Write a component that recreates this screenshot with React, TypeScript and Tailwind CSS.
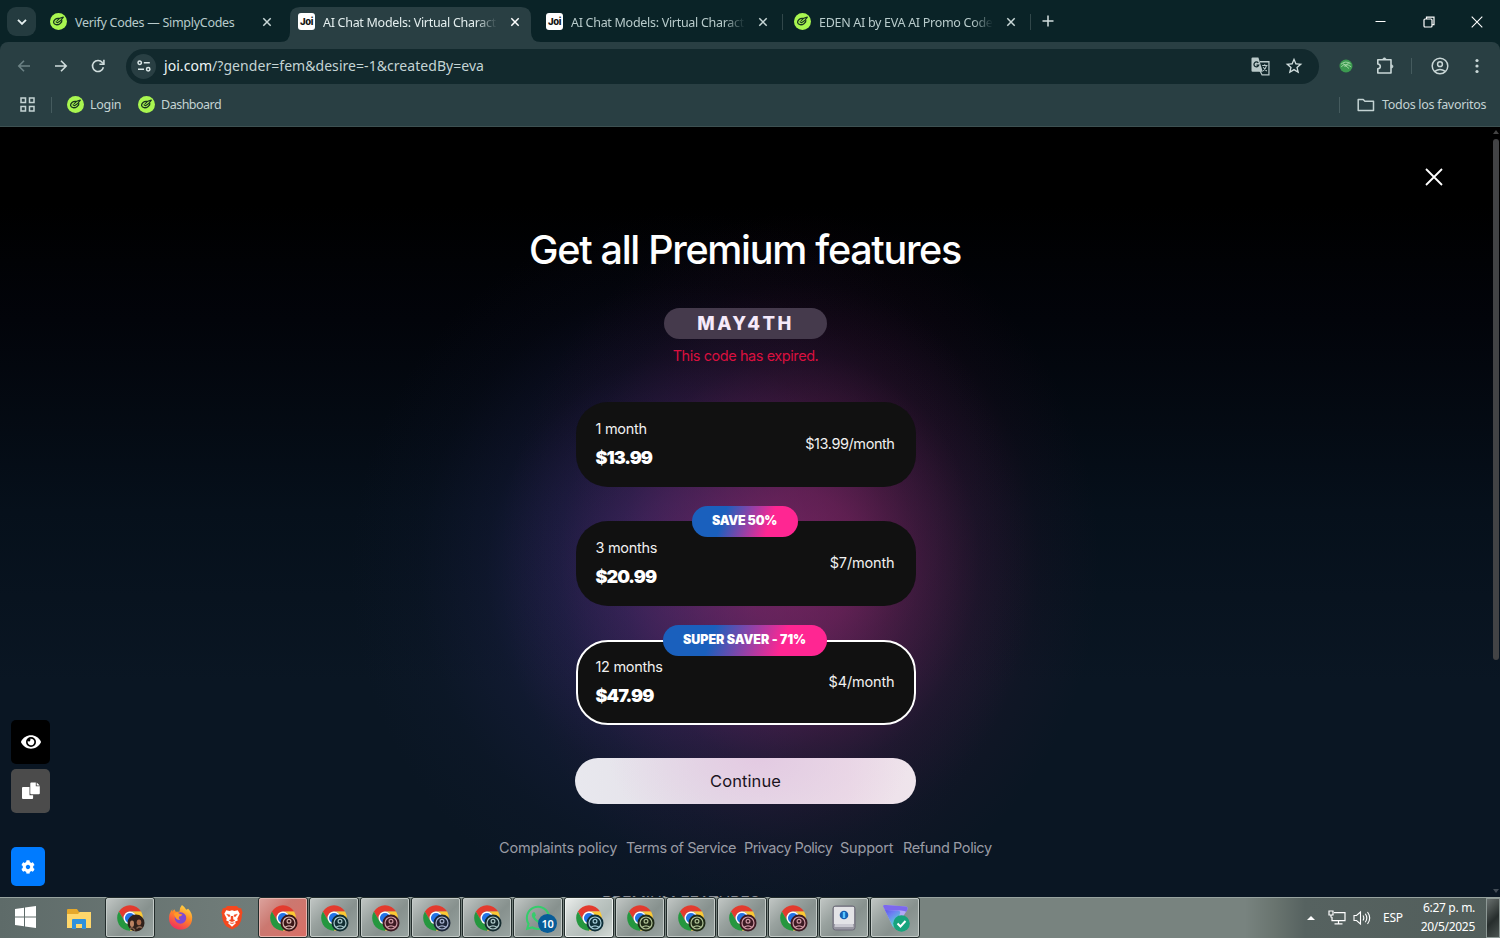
import React from 'react';
import { FaEye, FaCog, FaWhatsapp } from 'react-icons/fa';
import { MdOutlineStarBorder } from 'react-icons/md';

interface TabInfo {
    title: string;
    icon: 'simply' | 'joi';
    active?: boolean;
    separator?: boolean;
}

interface Plan {
    name: string;
    price: string;
    perMonth: string;
    badge?: string;
    badgeClass?: string;
    selected?: boolean;
}

const TABS: TabInfo[] = [
    { title: 'Verify Codes — SimplyCodes', icon: 'simply' },
    { title: 'AI Chat Models: Virtual Charact', icon: 'joi', active: true },
    { title: 'AI Chat Models: Virtual Charact', icon: 'joi', separator: true },
    { title: 'EDEN AI by EVA AI Promo Code', icon: 'simply', separator: true },
];

const PLANS: Plan[] = [
    { name: '1 month', price: '$13.99', perMonth: '$13.99/month' },
    { name: '3 months', price: '$20.99', perMonth: '$7/month', badge: 'SAVE 50%', badgeClass: 'w-[106px] tracking-[-0.25px]' },
    { name: '12 months', price: '$47.99', perMonth: '$4/month', badge: 'SUPER SAVER - 71%', badgeClass: 'w-[164px] tracking-[-0.05px]', selected: true },
];

const LINKS = [
    { label: 'Complaints policy', width: 'w-[119px]' },
    { label: 'Terms of Service', width: 'w-[110px] tracking-[-0.42px]' },
    { label: 'Privacy Policy', width: 'w-[88px] tracking-[-0.55px]' },
    { label: 'Support', width: 'w-[55px]' },
    { label: 'Refund Policy', width: 'w-[89px] tracking-[-0.42px]' },
];

function SimplyIcon() {
    return (
        <svg viewBox="0 0 17 17" className="h-[17px] w-[17px] shrink-0">
            <circle cx="8.5" cy="8.5" r="8.5" fill="#a9f650" />
            <g fill="none" stroke="#17331f" strokeLinecap="round" strokeLinejoin="round">
                <path d="M8.8 5.4C6 4.9 3.3 7.2 3.6 9.5c.4 2.6 4 2.9 6.3 1.2 1.5-1.1 2.2-2.3 1.9-3.2" strokeWidth="1.3" />
                <path d="m6.1 8.8 1.4.9c1.8-.7 4.3-3 5.8-5.5-2.4.3-5 1.8-6 3.3" strokeWidth="1.2" />
            </g>
        </svg>
    );
}

function JoiIcon() {
    return (
        <span className="flex h-[17px] w-[17px] shrink-0 items-center justify-center rounded-[3px] bg-white font-[Inter] text-[9.5px] font-extrabold leading-none tracking-[-0.4px] text-[#141414]">
            Joi
        </span>
    );
}

function CrossIcon({ className }: { className: string }) {
    return (
        <svg viewBox="0 0 10 10" className={className} fill="none" stroke="currentColor">
            <path d="m1.3 1.3 7.4 7.4M8.7 1.3 1.3 8.7" strokeWidth="1.5" />
        </svg>
    );
}

function Tab({ tab }: { tab: TabInfo }) {
    return (
        <div className="relative h-[35px] w-[248px] shrink-0">
            {tab.active && (
                <svg viewBox="0 0 261 35" className="absolute left-[-10px] top-0 h-[35px] w-[261px]">
                    <path d="M0 35Q10 35 10 25V10Q10 0 20 0H241Q251 0 251 10V25Q251 35 261 35Z" fill="#293f43" />
                </svg>
            )}
            <div className="relative flex h-[29px] items-center pl-2">
                {tab.icon === 'simply' ? <SimplyIcon /> : <JoiIcon />}
                <span
                    className={`ml-2 w-[174px] whitespace-nowrap pt-[3px] text-[12.5px] tracking-[-0.29px] ${tab.active ? 'text-[#e3eeee]' : 'text-[#b8cbcb]'} ${tab.title.startsWith('Verify') ? '' : '[mask-image:linear-gradient(to_right,#000_88%,transparent)]'}`}
                >
                    {tab.title}
                </span>
                <CrossIcon className={`ml-[13px] h-[10px] w-[10px] ${tab.active ? 'text-white' : 'text-[#c9d8d8]'}`} />
                {tab.separator && <span className="ml-[14px] h-4 w-px bg-[#31474a]" />}
            </div>
        </div>
    );
}

function TabStrip() {
    return (
        <div className="flex h-[42px] bg-[#0a2327] pt-[7px]">
            <div className="ml-[7px] mr-[6px] flex h-[29px] w-[29px] shrink-0 items-center justify-center rounded-[9px] bg-[#243b3f]">
                <svg viewBox="0 0 10 6" className="h-[6px] w-[10px]" fill="none" stroke="#e6f0f0" strokeWidth="1.9">
                    <path d="m1 .8 4 4 4-4" />
                </svg>
            </div>
            {TABS.map((tab, i) => (
                <Tab key={i} tab={tab} />
            ))}
            <svg viewBox="0 0 12 12" className="ml-[8px] mt-[8px] h-3 w-3" fill="none" stroke="#d3e0e0" strokeWidth="1.5">
                <path d="M6 .5v11M.5 6h11" />
            </svg>
            <div className="ml-auto flex h-[29px] items-center">
                <svg viewBox="0 0 11 11" className="mr-[37px] h-[11px] w-[11px]" stroke="#fff">
                    <path d="M.5 5.5h10" />
                </svg>
                <svg viewBox="0 0 12 12" className="mr-[36px] h-3 w-3" fill="none" stroke="#fff" strokeWidth="1.2">
                    <rect x="1" y="3" width="8" height="8" rx="1" />
                    <path d="M3.5 3V1.2H11v7.4H9.2" />
                </svg>
                <svg viewBox="0 0 12 12" className="mr-[17.5px] h-3 w-3" fill="none" stroke="#fff" strokeWidth="1.1">
                    <path d="m.7.7 10.6 10.6M11.3.7.7 11.3" />
                </svg>
            </div>
        </div>
    );
}

function Toolbar() {
    return (
        <div className="flex h-[48px] items-center rounded-t-[8px] bg-[#293f43]">
            <svg viewBox="0 0 14 14" className="ml-[17px] h-[14px] w-[14px]" fill="none" stroke="#6c8285" strokeWidth="1.6">
                <path d="M13 7H1.800M7 1.800 1.800 7 7 12.200" />
            </svg>
            <svg viewBox="0 0 14 14" className="ml-[23px] h-[14px] w-[14px]" fill="none" stroke="#d0dddd" strokeWidth="1.6">
                <path d="M1 7h11.200M7 1.800 12.200 7 7 12.200" />
            </svg>
            <svg viewBox="0 0 14 14" className="ml-[23px] h-[14px] w-[14px]" fill="none" stroke="#d0dddd" strokeWidth="1.6">
                <path d="M12.400 8.300A5.500 5.500 0 1 1 11.300 3.500L12.800 5" />
                <path d="M12.900 .8v4.500H8.400" />
            </svg>
            <div className="ml-[21px] flex h-[35px] w-[1193px] items-center rounded-full bg-[#12292d]">
                <span className="ml-[5px] flex h-[25px] w-[25px] items-center justify-center rounded-full bg-[#293f43]">
                    <svg viewBox="0 0 14 12" className="h-3 w-[14px]" fill="none" stroke="#dce8e8" strokeWidth="1.5">
                        <circle cx="2.7" cy="2.7" r="1.7" />
                        <path d="M6.800 2.700h6M1 9.300h6" />
                        <circle cx="11.2" cy="9.3" r="1.7" />
                    </svg>
                </span>
                <span className="ml-[8px] pb-px text-[14px] tracking-[0.05px] text-[#c4d4d4]">
                    <span className="text-[#edf5f5]">joi.com</span>/?gender=fem&amp;desire=-1&amp;createdBy=eva
                </span>
                <svg viewBox="0 0 18 18" className="ml-auto h-[19px] w-[19px]">
                    <path d="M8.500 4.500h8.500v12.500H10.500l-2-4" fill="none" stroke="#b9c9c9" strokeWidth="1.2" />
                    <path d="M1.500.5h5.500l4.200 13.500H1.500q-1 0-1-1V1.500q0-1 1-1z" fill="#b9c9c9" />
                    <path d="M6.900 5.500A2.300 2.300 0 1 0 7.300 7.700H5.200" fill="none" stroke="#12292d" strokeWidth="1.2" />
                    <path d="M10.600 8h5M13 6.800V8m1.800 0c-.6 2.400-2 4-3.400 5.200m.2-3.600c.8 1.600 2 2.800 3.400 3.700" fill="none" stroke="#b9c9c9" />
                </svg>
                <MdOutlineStarBorder className="ml-[14px] mr-[15px] h-5 w-5 text-[#d0dddd]" />
            </div>
            <svg viewBox="0 0 14 14" className="ml-[20px] h-[14px] w-[14px]">
                <circle cx="7" cy="7" r="6.5" fill="#3c9a50" />
                <path d="M2 5.200q4.500-4 9.500-.5M2.200 7.800q4-4.500 10 0M4 4.500l6 5M10 3.500 5.500 8" fill="none" stroke="#b5e3b4" strokeWidth=".8" />
            </svg>
            <svg viewBox="0 0 18 18" className="ml-[23px] h-[18px] w-[18px]" fill="none" stroke="#c9d7d7" strokeWidth="1.6" strokeLinejoin="round">
                <path d="M1.800 2.800H15V16H1.800V11.800Q4.300 11.500 4.300 9.400T1.800 7z" />
                <path d="M6.700 2.500a1.700 1.700 0 0 1 3.400 0zM15.300 7.700a1.700 1.700 0 0 1 0 3.400z" fill="#c9d7d7" strokeWidth=".6" />
            </svg>
            <span className="ml-[17px] h-4 w-px bg-[#455b5e]" />
            <svg viewBox="0 0 18 18" className="ml-[19px] h-[18px] w-[18px]" fill="none" stroke="#c9d7d7" strokeWidth="1.5">
                <circle cx="9" cy="9" r="7.8" />
                <circle cx="9" cy="7.2" r="2.4" />
                <path d="M3.800 14.300q5.200-3.800 10.400 0" />
            </svg>
            <svg viewBox="0 0 4 16" className="ml-[26px] h-4 w-1" fill="#c9d7d7">
                <circle cx="2" cy="2.5" r="1.6" />
                <circle cx="2" cy="8" r="1.6" />
                <circle cx="2" cy="13.5" r="1.6" />
            </svg>
        </div>
    );
}

function Bookmarks() {
    return (
        <div className="flex h-[37px] items-center border-b border-[#3d5152] bg-[#293f43] pb-[7px] text-[12.5px] tracking-[-0.3px] text-[#c4d3d3]">
            <svg viewBox="0 0 15 15" className="ml-[20px] h-[15px] w-[15px]" fill="none" stroke="#c4d3d3" strokeWidth="1.5">
                <path d="M1 1h4.500v4.500H1zM9.500 1H14v4.500H9.500zM1 9.500h4.500V14H1zM9.500 9.500H14V14H9.500z" />
            </svg>
            <span className="ml-4 h-4 w-px bg-[#455b5e]" />
            <span className="ml-[15px] flex w-[71px] items-center gap-[6px]">
                <SimplyIcon />
                <span className="pt-[2px]">Login</span>
            </span>
            <span className="flex items-center gap-[6px]">
                <SimplyIcon />
                <span className="pt-[2px] tracking-[-0.5px]">Dashboard</span>
            </span>
            <span className="ml-auto h-4 w-px bg-[#455b5e]" />
            <svg viewBox="0 0 18 14" className="ml-[17px] h-[14px] w-[18px]" fill="none" stroke="#c4d3d3" strokeWidth="1.5" strokeLinejoin="round">
                <path d="M1.200 1.500h5l1.700 1.700h8.600v9.300H1.200z" />
            </svg>
            <span className="ml-[7px] mr-[14px] w-[104px] whitespace-nowrap pt-[2px]">Todos los favoritos</span>
        </div>
    );
}

function PlanCard({ plan }: { plan: Plan }) {
    return (
        <div
            className={`relative flex h-[85px] w-[340px] items-center justify-between rounded-[32px] bg-[#111111] text-white ${plan.selected ? 'border-2 border-white pl-[18px] pr-[19px]' : 'pl-5 pr-[21px]'}`}
        >
            {plan.badge && (
                <span
                    className={`absolute left-1/2 top-0 -ml-px flex h-[31px] -translate-x-1/2 items-center justify-center whitespace-nowrap rounded-full bg-[linear-gradient(110deg,#1a60bd_30%,#ff2692_72%)] text-[12.5px] font-black ${plan.badgeClass} ${plan.selected ? 'mt-[-17px]' : 'mt-[-15px]'}`}
                >
                    {plan.badge}
                </span>
            )}
            <div className="pb-px">
                <div className="text-[14.5px] leading-5 tracking-[-0.3px] text-[#f0f0f0]">{plan.name}</div>
                <div className="mt-[8px] text-[18px] font-black leading-[22px] tracking-[-1px]">{plan.price}</div>
            </div>
            <div className={`pb-px text-[14.5px] text-[#f0f0f0] ${plan.badge ? 'tracking-[-0.15px]' : 'tracking-[-0.43px]'}`}>{plan.perMonth}</div>
        </div>
    );
}

function SideTools() {
    return (
        <div className="absolute left-[11px] top-[593px] flex flex-col text-white">
            <span className="flex h-[44px] w-[39px] items-center justify-center rounded-[5px] bg-black">
                <FaEye className="h-5 w-5" />
            </span>
            <span className="mt-[5px] flex h-[44px] w-[39px] items-center justify-center rounded-[5px] bg-[#4b4b4b]">
                <svg viewBox="0 0 18 18" className="h-[18px] w-[18px]" fill="#fff">
                    <path d="M1 5h6.500v8.300h3.600V16q0 1-1 1H1q-1 0-1-1V6q0-1 1-1z" />
                    <path d="M9.300.5h4.500V4.200h4v7q0 1-1 1H9.300q-1 0-1-1v-9.700q0-1 1-1zM14.700.5l3 2.900h-3z" />
                </svg>
            </span>
            <span className="mt-[34px] flex h-[39px] w-[34px] items-center justify-center rounded-[5px] bg-[#007bff]">
                <FaCog className="h-[14px] w-[14px]" />
            </span>
        </div>
    );
}

function PremiumPage() {
    return (
        <main className="relative flex h-[770px] overflow-hidden bg-[linear-gradient(to_bottom,#000_0%,#000_10%,#02040a_25%,#06101b_50%,#0a1623_72%,#0a1623_100%)] font-[Inter,sans-serif]">
            <div className="absolute inset-0 bg-[radial-gradient(ellipse_300px_350px_at_800px_435px,rgba(155,38,105,0.66),rgba(148,36,100,0.58)_20%,rgba(135,32,92,0.38)_40%,rgba(120,26,82,0.18)_60%,rgba(110,22,75,0.06)_80%,transparent_100%),radial-gradient(ellipse_340px_360px_at_690px_445px,rgba(72,52,135,0.66),rgba(64,50,130,0.56)_20%,rgba(54,46,120,0.38)_40%,rgba(46,42,105,0.18)_60%,rgba(40,40,95,0.06)_80%,transparent_100%)]" />
            <div className="relative flex w-[1491px] flex-col items-center">
                <h1 className="mt-[99px] shrink-0 whitespace-nowrap pr-px text-[39.5px] font-medium leading-[48px] tracking-[-1.3px] text-white">
                    Get all Premium features
                </h1>
                <div className="mt-[34px] flex h-[31px] w-[163px] shrink-0 items-center justify-center rounded-full bg-[#453a4c] pt-px text-[18.5px] font-extrabold tracking-[2.4px] text-[#f5eafa]">
                    MAY4TH
                </div>
                <div className="mt-[7px] text-[14.5px] leading-5 tracking-[-0.43px] text-[#d9103f]">This code has expired.</div>
                <div className="mt-[36px] flex flex-col gap-[33.75px]">
                    {PLANS.map((plan) => (
                        <PlanCard key={plan.name} plan={plan} />
                    ))}
                </div>
                <button className="mt-[33.5px] h-[46px] w-[341px] shrink-0 rounded-full bg-[radial-gradient(ellipse_150px_90px_at_54%_0%,#e3cae2,transparent),linear-gradient(to_right,#e8e8ee,#e4dfe8_40%,#eddde8_80%,#efe5ec)] font-[Inter] text-[16.5px] tracking-[0.1px] text-[#1b141d]">
                    Continue
                </button>
                <nav className="mt-[34px] flex gap-[8px] whitespace-nowrap text-[14.5px] leading-5 tracking-[-0.2px] text-[#9a9ca5]">
                    {LINKS.map((link) => (
                        <a key={link.label} className={link.width}>
                            {link.label}
                        </a>
                    ))}
                </nav>
                <div className="mt-[34px] w-[287px] whitespace-nowrap text-[16px] leading-5 tracking-[-0.2px] text-[#8b8e97]">PREMIUM FEATURES</div>
            </div>
            <svg viewBox="0 0 18 18" className="absolute left-[1425px] top-[41px] h-[18px] w-[18px]" fill="none" stroke="#fff" strokeWidth="1.8">
                <path d="m1 1 16 16M17 1 1 17" />
            </svg>
            <div className="relative flex w-[9px] flex-col items-center">
                <svg viewBox="0 0 6 4" className="mt-[3px] h-1 w-[6px]" fill="#444">
                    <path d="M3 0l3 4H0z" />
                </svg>
                <span className="mt-[5px] h-[521px] w-[6px] rounded-full bg-[#424345]" />
                <svg viewBox="0 0 6 4" className="mb-[4px] mt-auto h-1 w-[6px]" fill="#444d57">
                    <path d="M0 0h6L3 4z" />
                </svg>
            </div>
            <SideTools />
        </main>
    );
}

function ChromeLogo() {
    return (
        <svg viewBox="0 0 48 48" className="h-[28px] w-[28px]">
            <path d="M4.95 13A22 22 0 0 1 43.05 13H24A11 11 0 0 0 14.47 29.5z" fill="#e33b2e" />
            <path d="M4.95 13A22 22 0 0 0 24 46L33.53 29.5A11 11 0 0 1 14.47 29.5z" fill="#25973f" />
            <path d="M43.05 13A22 22 0 0 1 24 46L33.53 29.5A11 11 0 0 0 24 13z" fill="#fcc934" />
            <circle cx="24" cy="24" r="11" fill="#fff" />
            <circle cx="24" cy="24" r="8.7" fill="#2273e6" />
        </svg>
    );
}

// Chrome button with the profile avatar in its lower right corner
function ChromeProfile({ fill, line }: { fill: string; line: string }) {
    return (
        <span className="relative">
            <ChromeLogo />
            <svg viewBox="0 0 18 18" className="absolute left-[11px] top-[10px] h-[18px] w-[18px]" fill="none" stroke={line} strokeWidth="1.2">
                <circle cx="9" cy="9" r="8.5" fill={fill} stroke="none" />
                <circle cx="9" cy="9" r="6" />
                <circle cx="9" cy="7.3" r="1.9" />
                <path d="M5 13.300q4-3 8 0" />
            </svg>
        </span>
    );
}

function ChromePhoto() {
    return (
        <span className="relative">
            <ChromeLogo />
            <svg viewBox="0 0 18 18" className="absolute left-[11px] top-[10px] h-[18px] w-[18px]">
                <circle cx="9" cy="9" r="8.5" fill="#30201a" />
                <ellipse cx="5" cy="9.8" rx="2" ry="3.2" fill="#bd8463" />
                <ellipse cx="12" cy="8.3" rx="2.3" ry="2.9" fill="#a9694a" />
                <path d="M3 15q2-3 5 1.500M9.500 14.500q3-3 5.500-.5" fill="none" stroke="#82604d" strokeWidth="1.5" />
            </svg>
        </span>
    );
}

function ExplorerIcon() {
    return (
        <svg viewBox="0 0 24 22" className="mr-[2px] mt-[2px] h-[22px] w-6">
            <path d="M0 2q0-1 1-1h9l2 3h11q1 0 1 1v15H0z" fill="#e5a82b" />
            <path d="M0 6h11l2-2h11v16H0z" fill="#ffd76b" />
            <path d="M5 21v-9q0-1 1-1h12q1 0 1 1v9h-4v-5H9v5z" fill="#2f91dc" />
        </svg>
    );
}

function FirefoxIcon() {
    return (
        <svg viewBox="0 0 26 26" className="mr-[3px] h-[25px] w-[25px]">
            <defs>
                <linearGradient id="fox" x1="0.8" y1="0" x2="0.3" y2="1">
                    <stop offset="0" stopColor="#ffe14a" />
                    <stop offset=".45" stopColor="#ff8a26" />
                    <stop offset="1" stopColor="#f02c60" />
                </linearGradient>
            </defs>
            <path d="M14.500 0q3 2 4.500 5l2-1q5 5 4 11.500C24 22 19 25.500 13 25.500S1.500 21.500 1 14.500Q.7 9 4.500 4.500V7l2-2.500L8 7h4q0-4.500 2.500-7z" fill="url(#fox)" />
            <circle cx="13" cy="13.5" r="6" fill="#8049d2" />
            <path d="M6 9q3-2 6 0l3 1q-1 2-3.500 2-1 2 1 3.500-4 0-5-3z" fill="#ff9928" />
        </svg>
    );
}

function BraveIcon() {
    return (
        <svg viewBox="0 0 22 26" className="mr-[2px] h-[25px] w-[22px]">
            <path d="M6 1h10l2 2 2.500.5L22 8l-.7 2q0 8-4.300 12L11 25.500 5 22Q.7 18 .7 10L0 8l1.500-4.500L4 3z" fill="#f4481f" />
            <path d="M5 5.500l3.500.7L11 5.500l2.500.7 3.500-.7 2 3.500-2.500 5 .5 2-3 1.500 1 1.500-4 3.500L7 19l1-1.500L5 16l.5-2L3 9z" fill="#fff" />
            <path d="M5.500 9.500 9 10.500l-1 2zM16.500 9.500 13 10.500l1 2zM10 11.500v3.500l-2 1 3 1.500 3-1.500-2-1v-3.500M8.500 18.500l2.500 1 2.500-1" fill="#f4481f" stroke="#f4481f" strokeWidth=".5" />
        </svg>
    );
}

function WhatsappIcon() {
    return (
        <span className="relative">
            <FaWhatsapp className="h-[28px] w-[28px] text-[#35cd6b]" />
            <span className="absolute left-[14px] top-[10px] flex h-[19px] w-[19px] items-center justify-center rounded-full bg-[#075c98] text-[11px] font-semibold leading-none tracking-[-0.4px] text-white">
                10
            </span>
        </span>
    );
}

function KeyboardKeyIcon() {
    return (
        <svg viewBox="0 0 24 26" className="h-[26px] w-6">
            <rect x="1" y="1" width="22" height="24" rx="2.5" fill="#9998a3" stroke="#6d6b78" />
            <path d="M2 2h20v17H2z" fill="#e3e3e6" />
            <path d="M3 19h18l.5 3h-19z" fill="#cbcad2" />
            <circle cx="12" cy="10" r="4.3" fill="#1560b4" />
            <path d="M10.800 7h2.400v6h-2.400z" fill="#58c6ff" />
        </svg>
    );
}

function VpnIcon() {
    return (
        <svg viewBox="0 0 28 28" className="ml-[2px] mt-px h-7 w-7">
            <defs>
                <linearGradient id="vpn" x1="0" y1="0" x2="0.6" y2="1">
                    <stop offset="0" stopColor="#5a3fe6" />
                    <stop offset=".5" stopColor="#6d83f2" />
                    <stop offset="1" stopColor="#55e0d0" />
                </linearGradient>
            </defs>
            <path d="M1 2q1-1.500 3-1l20 1.500q2.500.5 1.200 3.500L15 22q-2 3.500-4.500 0z" fill="#b3a9f5" />
            <path d="M1 2 3 6l13 .5q3 .5 2 3L12.500 24q-1-.5-2-2z" fill="url(#vpn)" />
            <path d="M1 2q.5-1.500 3-1l20 1.500q2.500.5 1.200 3.500L24 8Q23 6.500 19 6.500L3 6z" fill="#7c68ee" />
            <circle cx="19.5" cy="19.5" r="8.3" fill="#17a47d" />
            <path d="m15.500 19.500 3 3 5-5.500" fill="none" stroke="#fff" strokeWidth="2" />
        </svg>
    );
}

const PROFILES = [
    { fill: '#3a1717', line: '#d9b5ae' },
    { fill: '#102d32', line: '#a9c9cc' },
    { fill: '#3c1922', line: '#d09aa5' },
    { fill: '#1c2638', line: '#a9b4d0' },
    { fill: '#162c30', line: '#aec9c8' },
    { fill: '#0e2f38', line: '#a5ccd8' },
    { fill: '#1f2a16', line: '#afc296' },
    { fill: '#1f2a16', line: '#afc296' },
    { fill: '#3c1922', line: '#d09aa5' },
    { fill: '#3c1922', line: '#d09aa5' },
];

function TaskButton({ children, tone = 'normal' }: { children: React.ReactNode; tone?: 'normal' | 'red' | 'bright' }) {
    const tones = {
        normal: 'bg-[linear-gradient(135deg,#c0c5c3_0%,#99a29f_35%,#87918e_60%,#98a3a0_100%)] border-[#c4cbc8]',
        red: 'bg-[linear-gradient(135deg,#dba19b_0%,#cb7870_40%,#d96f66_100%)] border-[#e8b4ae]',
        bright: 'bg-[linear-gradient(135deg,#e9ecea_0%,#c0c8c5_40%,#b2bcb8_65%,#d2d9d5_100%)] border-[#eef2f0]',
    };
    return (
        <div className="-mt-px h-[41px] w-[51px] shrink-0 pr-[1px]">
            <div className="h-full rounded-[3px] border border-[#222c2b]">
                <div className={`flex h-full items-center justify-center rounded-[2px] border ${tones[tone]}`}>{children}</div>
            </div>
        </div>
    );
}

function TaskIcon({ children }: { children: React.ReactNode }) {
    return <div className="flex w-[51px] shrink-0 items-center justify-center pb-px">{children}</div>;
}

function Taskbar() {
    return (
        <footer className="flex h-[41px] border-t border-[#98a39f] bg-[linear-gradient(to_right,#5e6b69,#6f7b78_15%,#78837f_40%,#78837f_83%,#69746f_85%,#566260_87%,#525e5b_100%)] text-white">
            <div className="flex w-[54px] shrink-0 items-center pb-[2px] pl-[15px]">
                <svg viewBox="0 0 21 22" className="h-[22px] w-[21px]" fill="#fff">
                    <path d="M0 3l9-1.300v8.800H0zM10 1.500 21 0v10.500H10zM0 11.500h9v8.800L0 19zM10 11.500h11V22l-11-1.500z" />
                </svg>
            </div>
            <TaskIcon><ExplorerIcon /></TaskIcon>
            <TaskButton><ChromePhoto /></TaskButton>
            <TaskIcon><FirefoxIcon /></TaskIcon>
            <TaskIcon><BraveIcon /></TaskIcon>
            {PROFILES.slice(0, 5).map((p, i) => (
                <TaskButton key={i} tone={i === 0 ? 'red' : 'normal'}>
                    <ChromeProfile {...p} />
                </TaskButton>
            ))}
            <TaskButton><WhatsappIcon /></TaskButton>
            {PROFILES.slice(5).map((p, i) => (
                <TaskButton key={i} tone={i === 0 ? 'bright' : 'normal'}>
                    <ChromeProfile {...p} />
                </TaskButton>
            ))}
            <TaskButton><KeyboardKeyIcon /></TaskButton>
            <TaskButton><VpnIcon /></TaskButton>
            <div className="ml-auto flex items-center pb-px">
                <svg viewBox="0 0 8 4" className="mr-[13px] h-1 w-2" fill="#fff">
                    <path d="M4 0l4 4H0z" />
                </svg>
                <svg viewBox="0 0 18 15" className="mr-[7px] h-[15px] w-[18px]" fill="none" stroke="#fff" strokeWidth="1.2">
                    <path d="M6 2.600h11v8H4V7M10.500 10.600v3M6.500 13.800h8M1 1h4v4H1zM3 5v2.500" />
                </svg>
                <svg viewBox="0 0 18 16" className="mr-[12px] h-4 w-[18px]" fill="none" stroke="#fff" strokeWidth="1.1">
                    <path d="M1 5.500h2.500L7.500 2v12l-4-3.500H1zM10 5.500q1.600 2.500 0 5M12.300 3.800q3 4.200 0 8.400M14.500 2q4.400 6 0 12" />
                </svg>
                <span className="w-[27px] text-[12px] tracking-[-0.2px]">ESP</span>
                <div className="w-[65px] whitespace-nowrap text-right text-[12px] leading-[18.5px] tracking-[-0.3px]">
                    <div>6:27 p. m.</div>
                    <div>20/5/2025</div>
                </div>
                <span className="ml-[11px] h-[40px] w-[14px] border border-[#8d9895] bg-[linear-gradient(135deg,#6a716f,#262d2c_55%,#4b5351)]" />
            </div>
        </footer>
    );
}

export default function App() {
    return (
        <div className="flex h-[938px] w-[1500px] flex-col overflow-hidden bg-[#0a2327] font-['Noto_Sans',sans-serif]">
            <TabStrip />
            <Toolbar />
            <Bookmarks />
            <PremiumPage />
            <Taskbar />
        </div>
    );
}
